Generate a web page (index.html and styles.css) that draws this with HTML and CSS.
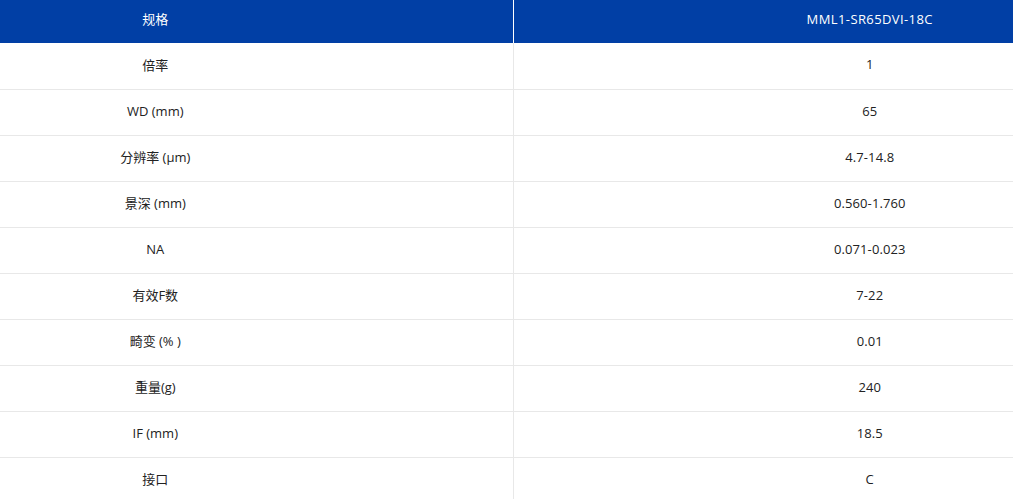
FILE: index.html
```html
<!DOCTYPE html>
<html lang="zh">
<head>
<meta charset="utf-8">
<link rel="stylesheet" href="styles.css">
</head>
<body>
<table class="spec">
  <thead>
    <tr><th class="c1">规格</th><th class="c2">MML1-SR65DVI-18C</th></tr>
  </thead>
  <tbody>
    <tr class="first"><td class="c1">倍率</td><td class="c2">1</td></tr>
    <tr><td class="c1">WD (mm)</td><td class="c2">65</td></tr>
    <tr><td class="c1">分辨率 (μm)</td><td class="c2">4.7-14.8</td></tr>
    <tr><td class="c1">景深 (mm)</td><td class="c2">0.560-1.760</td></tr>
    <tr><td class="c1">NA</td><td class="c2">0.071-0.023</td></tr>
    <tr><td class="c1">有效F数</td><td class="c2">7-22</td></tr>
    <tr><td class="c1">畸变 (% )</td><td class="c2">0.01</td></tr>
    <tr><td class="c1">重量(g)</td><td class="c2">240</td></tr>
    <tr><td class="c1">IF (mm)</td><td class="c2">18.5</td></tr>
    <tr><td class="c1">接口</td><td class="c2">C</td></tr>
  </tbody>
</table>
</body>
</html>
```
FILE: styles.css
```css
html, body {
  margin: 0;
  padding: 0;
  background: #fff;
}
body {
  font-family: "Open Sans", "Noto Sans CJK SC", sans-serif;
  font-size: 13px;
  color: #222;
  overflow: hidden;
}
.spec {
  border-collapse: collapse;
  width: 1013px;
  table-layout: fixed;
}
.spec th, .spec td {
  text-align: center;
  padding: 0 0 3px 0;
  font-weight: normal;
  box-sizing: border-box;
}
.spec th {
  background: #013fa5;
  color: #fff;
  height: 43px;
  padding-bottom: 6px;
}
.spec td {
  height: 46px;
  border-top: 1px solid #e8e8e8;
}
.spec tr.first td {
  border-top: none;
}
.spec .c1 {
  width: 513px;
  padding-right: 202px;
}
.spec .c2 {
  padding-left: 213px;
  border-left: 1px solid #e8e8e8;
  letter-spacing: 0.1px;
}
.spec th.c2 {
  border-left: 1px solid #fff;
  letter-spacing: 0.4px;
}
```
